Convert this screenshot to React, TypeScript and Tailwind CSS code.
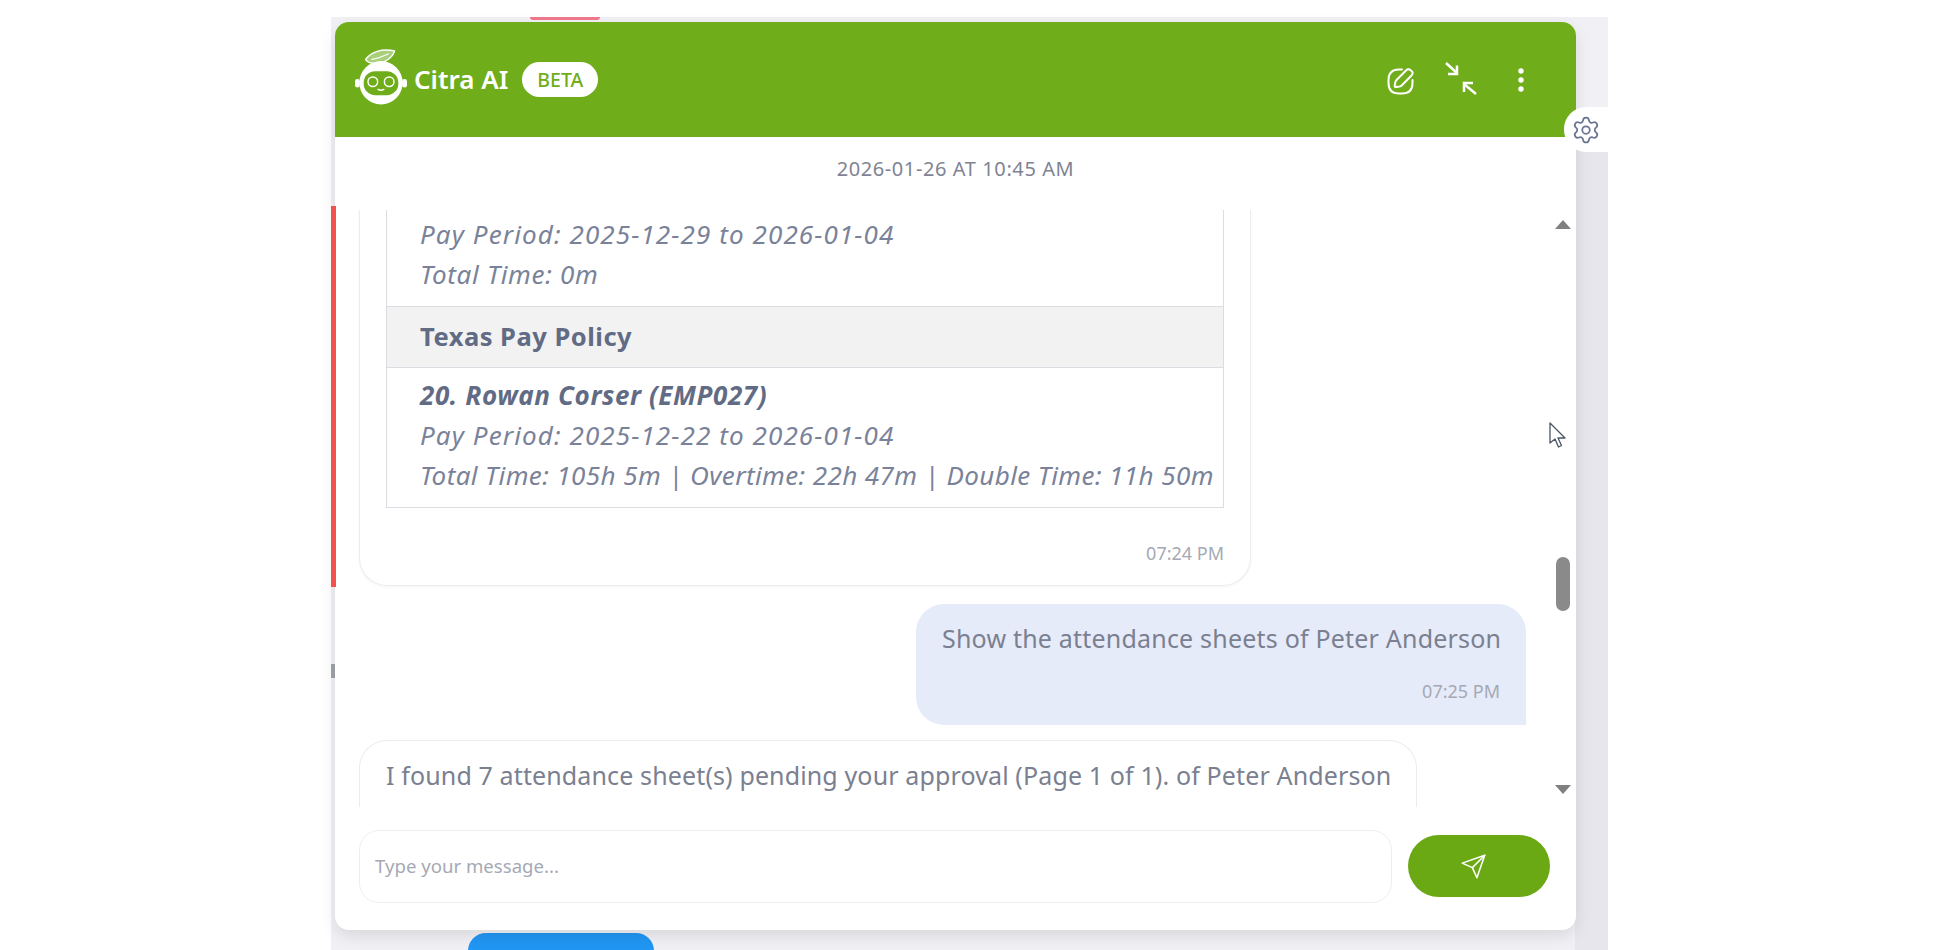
import { Settings } from 'lucide-react';
import { FiSend } from 'react-icons/fi';

function RobotLogo() {
  return (
    <svg width="52" height="60" viewBox="0 0 54 60" fill="none" className="shrink-0">
      <path d="M11 13c5-8 17-12 30-9-2 7-10 13-20 13-4 0-8-1-10-4z" stroke="white" strokeWidth="1.400" fill="#a9cf7a" />
      <path d="M17 13c6-1 12-3 18-6" stroke="white" strokeWidth="1.200" />
      <rect x="0" y="33" width="5" height="9" rx="2.500" fill="white" />
      <rect x="49" y="33" width="5" height="9" rx="2.500" fill="white" />
      <circle cx="27" cy="37" r="22.500" fill="white" />
      <rect x="9" y="25" width="36" height="25" rx="12" fill="#6fac1a" />
      <circle cx="18.500" cy="36" r="5" stroke="white" strokeWidth="1.500" />
      <circle cx="35.500" cy="36" r="5" stroke="white" strokeWidth="1.500" />
      <path d="M24 44c2 1.200 4 1.200 6 0" stroke="white" strokeWidth="1.500" strokeLinecap="round" />
    </svg>
  );
}

function NewChatIcon() {
  return (
    <svg width="32" height="32" viewBox="0 0 32 32" fill="none" stroke="white" strokeWidth="2" strokeLinecap="round" strokeLinejoin="round" className="mt-[2px]">
      <path d="M17 4.500H14C7 4.500 3.500 8 3.500 15v3c0 7 3.500 10.500 10.500 10.500h3c7 0 10.500-3.500 10.500-10.500v-3" />
      <path d="M21 5.500 11.500 15c-.6.6-1 1.500-1.200 2.300l-.6 3.500c-.1.9.5 1.500 1.400 1.300l3.500-.6c.8-.2 1.700-.6 2.300-1.200L26 11c2-2 2.500-3.500 0-5.500s-3.500-1.500-5 0z" />
    </svg>
  );
}

function MinimizeIcon() {
  return (
    <svg width="36" height="36" viewBox="0 0 36 36" fill="none" stroke="white" strokeWidth="2.500" className="mb-[2px]">
      <path d="M3 2l11 10M14 4.500v8.500H5" />
      <path d="M33 33 21 23M21 31v-9h9" />
    </svg>
  );
}

function CursorIcon() {
  return (
    <svg width="20" height="28" viewBox="0 0 20 28" className="absolute top-[212px] right-[8px] z-10">
      <path d="M2 1v20l5-4 3.500 8 3-1.500-3.500-7.500h7z" fill="white" stroke="#4b5563" strokeWidth="1.300" strokeLinejoin="round" />
    </svg>
  );
}

export default function App() {
  return (
    <div className="relative flex h-[950px] w-[1940px] overflow-hidden bg-white font-['Noto_Sans','Liberation_Sans',sans-serif]">
      <div className="w-[331px] shrink-0 bg-white" />
      <div className="relative w-[1277px] shrink-0 bg-[#f1f1f5]">
        <div className="h-[17px] bg-white" />
        <div className="absolute top-[17px] left-[199px] h-[3px] w-[70px] rounded-b-full bg-[#f0788a]" />
        <div className="absolute top-[150px] right-0 bottom-0 w-[33px] bg-[#e6e6ec]" />
        <div className="absolute top-[206px] left-0 z-10 h-[381px] w-[5px] bg-[#f4504f]" />
        <div className="absolute top-[664px] left-0 h-[14px] w-[4px] bg-[#a0a3ab]" />
        <div className="absolute top-[933px] left-[137px] h-[30px] w-[186px] rounded-t-[18px] bg-[#2196f3]" />

        <div className="absolute top-[107px] right-0 z-20 flex h-[45px] w-[44px] items-center justify-center rounded-l-[22px] bg-white">
          <Settings size={30} strokeWidth={1.4} className="text-[#6b7490]" />
        </div>

        <div className="absolute top-[22px] left-[4px] flex h-[908px] w-[1241px] flex-col overflow-hidden rounded-[14px] bg-white shadow-[0_6px_16px_rgba(0,0,0,0.10)]">
          <div className="flex h-[115px] shrink-0 items-center justify-between bg-[#70ad1b] pr-[51px] pl-[20px] text-white">
            <div className="flex items-center">
              <div className="mb-[8px]">
                <RobotLogo />
              </div>
              <span className="ml-[7px] text-[26px] font-semibold">Citra AI</span>
              <span className="ml-[14px] rounded-full bg-white px-[15px] py-[3px] text-[19.500px] font-medium text-[#70ad1b]">BETA</span>
            </div>
            <div className="flex items-center">
              <NewChatIcon />
              <div className="ml-[26px]">
                <MinimizeIcon />
              </div>
              <svg width="8" height="26" viewBox="0 0 8 26" fill="white" className="ml-[38px]">
                <circle cx="4" cy="4" r="2.700" />
                <circle cx="4" cy="13" r="2.700" />
                <circle cx="4" cy="22" r="2.700" />
              </svg>
            </div>
          </div>

          <div className="flex h-[73px] shrink-0 items-center justify-center pb-[9px] text-[20px] tracking-[0.6px] text-[#7f8494]">2026-01-26 AT 10:45 AM</div>

          <div className="relative min-h-0 flex-1 overflow-hidden px-[24px]">
            <CursorIcon />
            <div className="absolute top-[8px] right-[4px] flex h-[578px] w-[18px] flex-col items-center justify-between bg-white">
              <div className="mt-[2px] h-0 w-0 border-x-[8px] border-b-[9px] border-x-transparent border-b-[#808080]" />
              <div className="absolute top-[339px] h-[54px] w-[14px] rounded-full bg-[#8a8a8a]" />
              <div className="mb-[2px] h-0 w-0 border-x-[8px] border-t-[9px] border-x-transparent border-t-[#808080]" />
            </div>

            <div className="w-[892px] rounded-b-[28px] border-x border-b border-[#ececf0] px-[26px] pb-[20px] shadow-[0_1px_3px_rgba(0,0,0,0.05)]">
              <div className="border-x border-b border-[#dcdde2] text-[26px] leading-[40px] text-[#7a8299] italic">
                <div className="pt-[4px] pr-[10px] pb-[12px] pl-[33px]">
                  <p className="tracking-[1.1px]">Pay Period: 2025-12-29 to 2026-01-04</p>
                  <p className="tracking-[0.7px]">Total Time: 0m</p>
                </div>
                <div className="flex h-[62px] items-center border-y border-[#dcdde2] bg-[#f2f2f3] px-[33px] pb-[3px] text-[25.500px] font-bold tracking-[0.5px] text-[#616b84] not-italic">Texas Pay Policy</div>
                <div className="pt-[7px] pr-[10px] pb-[12px] pl-[33px]">
                  <p className="tracking-[0.6px] font-bold text-[#616b84]">20. Rowan Corser (EMP027)</p>
                  <p className="tracking-[1.1px]">Pay Period: 2025-12-22 to 2026-01-04</p>
                  <p className="tracking-[0.4px] whitespace-nowrap">Total Time: 105h 5m | Overtime: 22h 47m | Double Time: 11h 50m</p>
                </div>
              </div>
              <p className="mt-[33px] text-right text-[18px] leading-[24px] text-[#a5a9b3]">07:24 PM</p>
            </div>

            <div className="mt-[18px] ml-[557px] h-[121px] w-[610px] rounded-[28px] rounded-br-none bg-[#e6ebfa] px-[26px] pt-[14px]">
              <p className="text-[25px] leading-[40px] tracking-[0.2px] whitespace-nowrap text-[#7a8090]">Show the attendance sheets of Peter Anderson</p>
              <p className="mt-[21px] text-right text-[18px] leading-[24px] text-[#a5a9b3]">07:25 PM</p>
            </div>

            <div className="mt-[15px] w-[1058px] rounded-t-[28px] border-x border-t border-[#ececf0] px-[26px] pt-[14px] pb-[60px]">
              <p className="text-[25px] leading-[40px] tracking-[0.13px] whitespace-nowrap text-[#7a8090]">I found 7 attendance sheet(s) pending your approval (Page 1 of 1). of Peter Anderson</p>
            </div>
          </div>

          <div className="flex h-[123px] shrink-0 items-center gap-[16px] pr-[26px] pb-[5px] pl-[24px]">
            <div className="flex h-[73px] flex-1 items-center rounded-[20px] border border-[#eeeef2] px-[15px] text-[18.600px] text-[#a5a9b5]">Type your message...</div>
            <div className="flex h-[62px] w-[142px] items-center justify-center rounded-full bg-[#6aa814] pr-[12px] text-white">
              <FiSend size={27} strokeWidth={1.4} />
            </div>
          </div>
        </div>
      </div>
      <div className="flex-1 bg-white" />
    </div>
  );
}
